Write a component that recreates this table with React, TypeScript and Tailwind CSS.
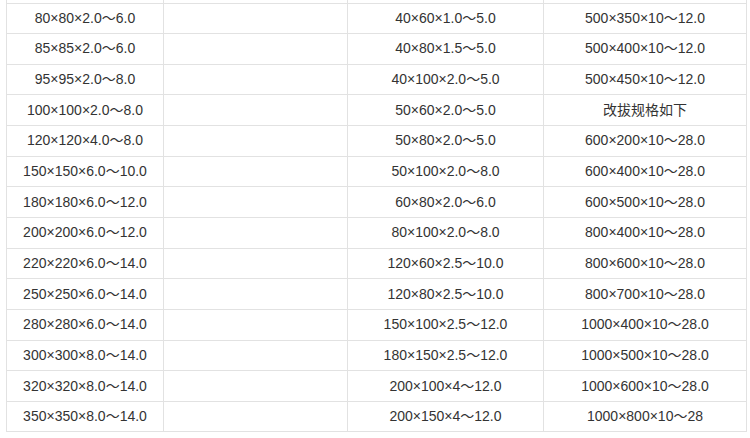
import React from 'react';

const rows: [string, string, string][] = [
  ['80×80×2.0～6.0', '40×60×1.0～5.0', '500×350×10～12.0'],
  ['85×85×2.0～6.0', '40×80×1.5～5.0', '500×400×10～12.0'],
  ['95×95×2.0～8.0', '40×100×2.0～5.0', '500×450×10～12.0'],
  ['100×100×2.0～8.0', '50×60×2.0～5.0', '改拔规格如下'],
  ['120×120×4.0～8.0', '50×80×2.0～5.0', '600×200×10～28.0'],
  ['150×150×6.0～10.0', '50×100×2.0～8.0', '600×400×10～28.0'],
  ['180×180×6.0～12.0', '60×80×2.0～6.0', '600×500×10～28.0'],
  ['200×200×6.0～12.0', '80×100×2.0～8.0', '800×400×10～28.0'],
  ['220×220×6.0～14.0', '120×60×2.5～10.0', '800×600×10～28.0'],
  ['250×250×6.0～14.0', '120×80×2.5～10.0', '800×700×10～28.0'],
  ['280×280×6.0～14.0', '150×100×2.5～12.0', '1000×400×10～28.0'],
  ['300×300×8.0～14.0', '180×150×2.5～12.0', '1000×500×10～28.0'],
  ['320×320×8.0～14.0', '200×100×4～12.0', '1000×600×10～28.0'],
  ['350×350×8.0～14.0', '200×150×4～12.0', '1000×800×10～28'],
];

const cell = 'flex items-center justify-center border-r border-[#e2e2e2]';

const App: React.FC = () => {
  return (
    <div
      className="w-[750px] h-[438px] bg-white overflow-hidden text-[14px] text-[#333]"
      style={{ fontFamily: '"Liberation Sans", "Noto Sans CJK SC", sans-serif' }}
    >
      <div className="ml-[6px] w-[741px] border-l border-[#e2e2e2]">
        {/* sliver of the row above */}
        <div className="grid grid-cols-[157px_184px_196px_203px] h-[2.5px]">
          <div className={cell} />
          <div className={cell} />
          <div className={cell} />
          <div className={cell} />
        </div>
        {rows.map((r, i) => (
          <div
            key={i}
            className={`grid grid-cols-[157px_184px_196px_203px] h-[30.66px] border-t border-[#e2e2e2] ${
              i === rows.length - 1 ? 'border-b' : ''
            }`}
          >
            <div className={cell}>{r[0]}</div>
            <div className={cell} />
            <div className={cell}>{r[1]}</div>
            <div className={cell}>{r[2]}</div>
          </div>
        ))}
      </div>
    </div>
  );
};

export default App;
